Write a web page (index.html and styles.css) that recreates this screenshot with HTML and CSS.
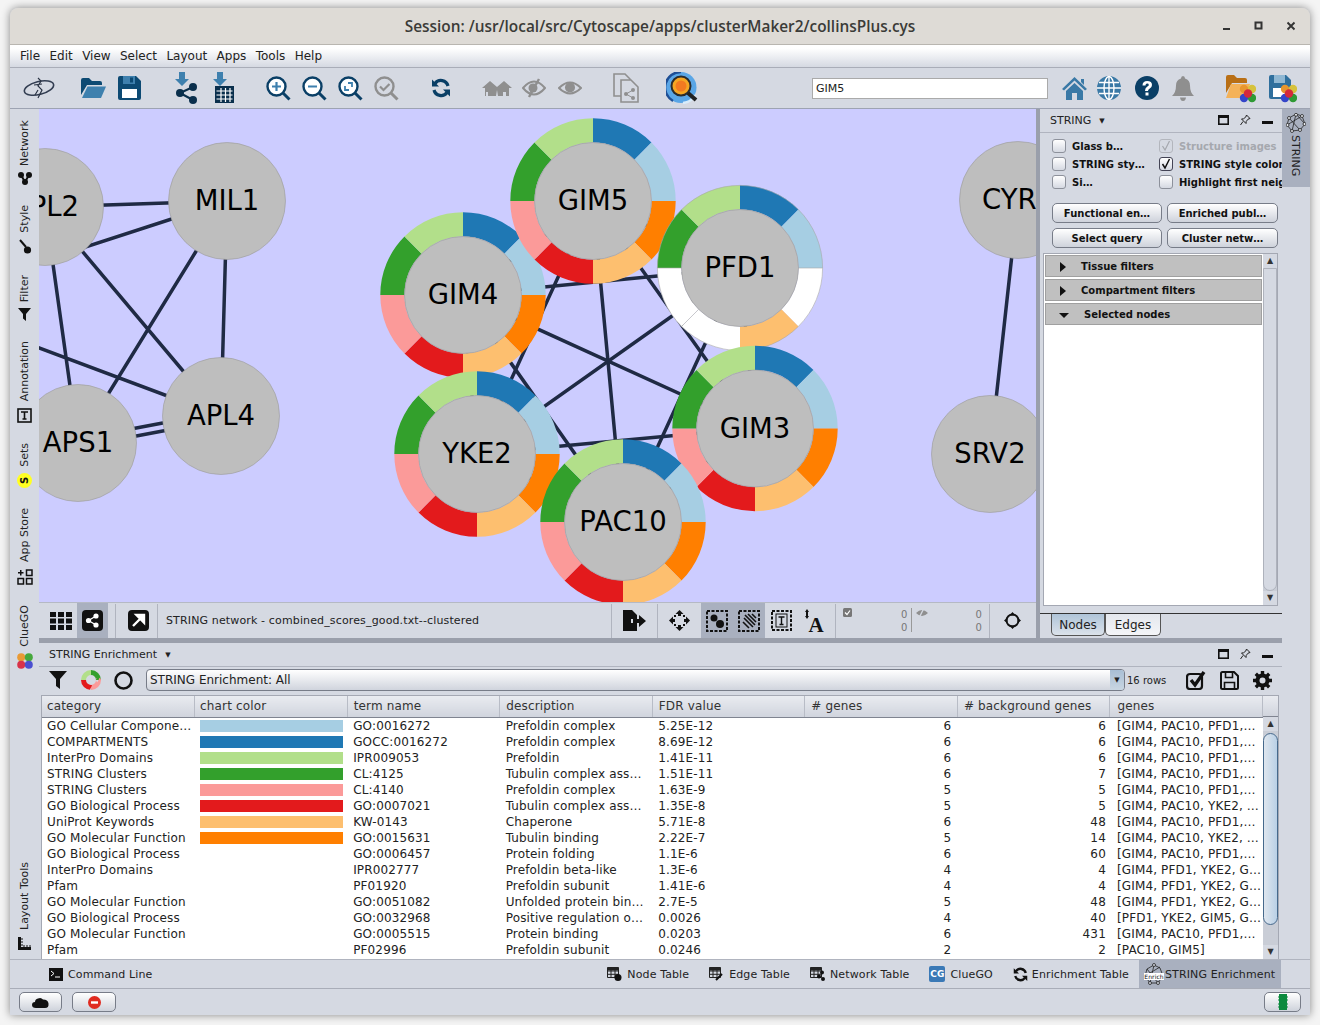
FILE: index.html
```html
<!DOCTYPE html>
<html lang="en">
<head>
<meta charset="utf-8">
<title>Cytoscape</title>
<link rel="stylesheet" href="styles.css">
</head>
<body>
<div class="window">
  <header class="titlebar">
    <span class="title">Session: /usr/local/src/Cytoscape/apps/clusterMaker2/collinsPlus.cys</span>
    <div class="winbtns">
      <svg width="10" height="10" viewBox="0 0 10 10"><rect x="1" y="7" width="7" height="2" fill="#333"/></svg>
      <svg width="10" height="10" viewBox="0 0 10 10"><rect x="1.5" y="1.5" width="6" height="6" fill="none" stroke="#333" stroke-width="2"/></svg>
      <svg width="10" height="10" viewBox="0 0 10 10"><path d="M1.5 1.5l7 7M8.500 1.500l-7 7" stroke="#333" stroke-width="1.900"/></svg>
    </div>
  </header>
  <nav class="menubar"><span>File</span><span>Edit</span><span>View</span><span>Select</span><span>Layout</span><span>Apps</span><span>Tools</span><span>Help</span></nav>
  <div class="toolbar">
    <svg class="t-logo" width="34" height="26" viewBox="0 0 34 26"><ellipse cx="17" cy="13" rx="15" ry="6.500" fill="none" stroke="#333e52" stroke-width="1.600" transform="rotate(-14 17 13)"/><path d="M16 3l3 3-3 5 4 4-4 8M12 10l8-1M13 20l3-5" fill="none" stroke="#2b3445" stroke-width="1.200"/></svg>
    <svg class="t-open" width="25" height="22" viewBox="0 0 25 22"><path d="M0 21V3q0-2 2-2h6l3 3h8q2 0 2 2v2H6L0 18z" fill="#0d4a73"/><path d="M6.500 9.500H25l-5 11.500H1z" fill="#3e80ae"/></svg>
    <svg class="t-save" width="23" height="24" viewBox="0 0 23 24"><path d="M0 2q0-2 2-2h16l5 5v17q0 2-2 2H2q-2 0-2-2z" fill="#0d4a73"/><rect x="5" y="0" width="12" height="8" fill="#3e80ae"/><rect x="12" y="1.500" width="3" height="5" fill="#0d4a73"/><rect x="4" y="13" width="15" height="9" fill="#fff"/></svg>
    <svg class="t-imp" width="23" height="32" viewBox="0 0 23 32"><path d="M4 0h6v7h4l-7 7-7-7h4z" fill="#3e80ae"/><g fill="#0a2f4c"><circle cx="5" cy="21" r="4"/><circle cx="18" cy="15" r="4"/><circle cx="18" cy="28" r="4"/><path d="M5 21L18 15M5 21L18 28" stroke="#0a2f4c" stroke-width="2"/></g></svg>
    <svg class="t-impt" width="22" height="32" viewBox="0 0 22 32"><path d="M4 0h6v7h4l-7 7-7-7h4z" fill="#3e80ae"/><rect x="2" y="14" width="19" height="17" fill="#0a2f4c"/><path d="M3.500 19h16M3.500 23h16M3.500 27h16M8 16v14M12.500 16v14M17 16v14" stroke="#fff" stroke-width="1.200"/></svg>
    <svg class="t-zin" width="25" height="25" viewBox="0 0 25 25"><circle cx="10.500" cy="10.500" r="9" fill="#fff" stroke="#0a3f66" stroke-width="2.400"/><path d="M16.500 16.500l7 7" stroke="#0a3f66" stroke-width="3"/><path d="M6 10.500h9M10.500 6v9" stroke="#3e80ae" stroke-width="2.200"/></svg>
    <svg class="t-zi" width="25" height="25" viewBox="0 0 25 25"><circle cx="10.500" cy="10.500" r="9" fill="#fff" stroke="#0a3f66" stroke-width="2.400"/><path d="M16.500 16.500l7 7" stroke="#0a3f66" stroke-width="3"/><path d="M6 10.500h9" stroke="#3e80ae" stroke-width="2.200"/></svg>
    <svg class="t-zi" width="25" height="25" viewBox="0 0 25 25"><circle cx="10.500" cy="10.500" r="9" fill="#fff" stroke="#0a3f66" stroke-width="2.400"/><path d="M16.500 16.500l7 7" stroke="#0a3f66" stroke-width="3"/><path d="M7 10v4h4M14 11V7h-4" fill="none" stroke="#3e80ae" stroke-width="1.800"/></svg>
    <svg class="t-zi" width="25" height="25" viewBox="0 0 25 25"><circle cx="10.500" cy="10.500" r="9" fill="none" stroke="#8f8f8f" stroke-width="2.400"/><path d="M16.500 16.500l7 7" stroke="#8f8f8f" stroke-width="3"/><path d="M6 10.500l3.500 3.500 6-6" fill="none" stroke="#8f8f8f" stroke-width="2.200"/></svg>
    <svg class="t-ref" width="20" height="20" viewBox="0 0 20 20"><path d="M17 8a7.300 7.300 0 0 0-13-2.500" fill="none" stroke="#0a3f66" stroke-width="3.200"/><path d="M1 1.500v7h7z" fill="#0a3f66"/><path d="M3 12a7.300 7.300 0 0 0 13 2.500" fill="none" stroke="#0a3f66" stroke-width="3.200"/><path d="M19 18.500v-7h-7z" fill="#0a3f66"/></svg>
    <svg class="t-hide" width="31" height="15" viewBox="0 0 31 15"><path d="M0 7L8 0l7 6 7-6 8 7h-3v8h-3v-4h-3v4h-5l-1-6-1 6H6v-4H4v4H3V7z" fill="#8f8f8f"/></svg>
    <svg class="t-eye1" width="24" height="20" viewBox="0 0 24 20"><path d="M1 10q11-13 22 0-11 13-22 0z" fill="none" stroke="#8f8f8f" stroke-width="2"/><circle cx="11" cy="10" r="4.500" fill="#8f8f8f"/><path d="M7 19L17 1" stroke="#8f8f8f" stroke-width="2.400"/></svg>
    <svg class="t-eye2" width="24" height="18" viewBox="0 0 24 18"><path d="M1 9q11-11 22 0-11 11-22 0z" fill="none" stroke="#8f8f8f" stroke-width="2"/><circle cx="12" cy="8.500" r="5" fill="#8f8f8f"/></svg>
    <svg class="t-doc" width="26" height="30" viewBox="0 0 26 30"><path d="M1 1h11l5 5v17H1z" fill="#d5d9e2" stroke="#8f8f8f" stroke-width="1.600"/><path d="M8 7h10l7 7v15H8z" fill="#d5d9e2" stroke="#8f8f8f" stroke-width="1.600"/><g fill="#8f8f8f"><circle cx="13" cy="21" r="2"/><circle cx="20" cy="17" r="2"/><circle cx="20" cy="25" r="2"/><path d="M13 21l7-4M13 21l7 4" stroke="#8f8f8f"/></g></svg>
    <svg class="t-find" width="33" height="32" viewBox="0 0 33 32"><circle cx="15" cy="15.500" r="15.500" fill="#5aa6e6"/><path d="M15 0a15.500 15.500 0 0 0-8 29" fill="none" stroke="#1f4f95" stroke-width="2.400"/><path d="M17 31a15.500 15.500 0 0 0 12-8" fill="none" stroke="#d8ecfb" stroke-width="2.400"/><circle cx="15" cy="14" r="9.500" fill="#f5a623" stroke="#2b2b2b" stroke-width="2"/><circle cx="15" cy="14" r="5.500" fill="#f27a21"/><path d="M22 21l8 7" stroke="#222" stroke-width="4"/></svg>
    <div class="search">GIM5</div>
    <svg class="t-home" width="25" height="23" viewBox="0 0 25 23"><path d="M0 12L12.500 0 25 12l-2 1.500-10.500-10-10.500 10z" fill="#3a79a6"/><path d="M19 2h3v6l-3-3z" fill="#3a79a6"/><path d="M4 14l8.500-8 8.500 8v9h-6v-7h-5v7H4z" fill="#3a79a6"/></svg>
    <svg class="t-glob" width="24" height="24" viewBox="0 0 24 24"><circle cx="12" cy="12" r="12" fill="#3a79a6"/><g fill="none" stroke="#fff" stroke-width="1.400"><ellipse cx="12" cy="12" rx="5" ry="11.500"/><path d="M12 0v24M0 12h24M2 6.500h20M2 17.500h20"/></g></svg>
    <svg class="t-help" width="24" height="24" viewBox="0 0 24 24"><circle cx="12" cy="12" r="12" fill="#0a3f66"/><path d="M7.500 9.500q0-4.500 4.700-4.500 4.800 0 4.800 4 0 2.500-2.500 3.700-1.500.8-1.500 2.300h-3q0-3 2-4.200 1.800-1 1.800-1.900 0-1.300-1.600-1.300-1.700 0-1.700 1.900z" fill="#fff"/><rect x="10.500" y="16.500" width="3" height="3" fill="#fff"/></svg>
    <svg class="t-bell" width="22" height="25" viewBox="0 0 22 25"><path d="M11 0q2 0 2 2.500 5 1.500 5 7 0 7 4 10.500H0q4-3.500 4-10.500 0-5.500 5-7Q9 0 11 0zM8 21.500h6Q13.500 25 11 25t-3-3.500z" fill="#8f8f8f"/></svg>
    <svg class="t-fold" width="30" height="30" viewBox="0 0 30 30"><path d="M0 24V4q0-2 2-2h6l3 3h8q2 0 2 2v3H6L0 20z" fill="#b96f15"/><path d="M5 11h19l-5 14H0z" fill="#f4b259"/><circle cx="18" cy="16" r="4.200" fill="#e8952d"/><circle cx="26" cy="16" r="4.200" fill="#d6c23c"/><circle cx="18" cy="25" r="4.200" fill="#3546c9"/><circle cx="26" cy="25" r="4.200" fill="#2f9a35"/><circle cx="22" cy="20.500" r="4.200" fill="#d4293b"/></svg>
    <svg class="t-sav2" width="28" height="30" viewBox="0 0 28 30"><path d="M0 4q0-2 2-2h15l5 5v17q0 2-2 2H2q-2 0-2-2z" fill="#2f6f9d"/><rect x="5" y="2" width="11" height="8" fill="#8fb7d3"/><rect x="4" y="15" width="13" height="9" fill="#fff"/><circle cx="16" cy="16" r="4.200" fill="#e8952d"/><circle cx="24" cy="16" r="4.200" fill="#d6c23c"/><circle cx="16" cy="25" r="4.200" fill="#3546c9"/><circle cx="24" cy="25" r="4.200" fill="#2f9a35"/><circle cx="20" cy="20.500" r="4.200" fill="#d4293b"/></svg>
  </div>

  <div class="main">
    <aside class="lstrip">
      <div class="vtab"><span class="vt">Network</span>
        <svg width="14" height="13" viewBox="0 0 14 13"><g fill="#111"><circle cx="3" cy="3" r="3"/><circle cx="11" cy="3" r="3"/><circle cx="7" cy="10" r="3"/><path d="M3 3l4 7 4-7" stroke="#111" stroke-width="2" fill="none"/></g></svg></div>
      <div class="vtab"><span class="vt">Style</span>
        <svg width="14" height="15" viewBox="0 0 14 15"><path d="M2 1l6 7" stroke="#111" stroke-width="2"/><ellipse cx="9.500" cy="11" rx="3.600" ry="3.600" fill="#111"/></svg></div>
      <div class="vtab"><span class="vt">Filter</span>
        <svg width="13" height="13" viewBox="0 0 13 13"><path d="M0 0h13L8 6v7L5 10.500V6z" fill="#111"/></svg></div>
      <div class="vtab"><span class="vt">Annotation</span>
        <svg width="15" height="15" viewBox="0 0 15 15"><rect x="1" y="1" width="13" height="13" fill="none" stroke="#111" stroke-width="1.600"/><path d="M4 4h7M7.500 4v7M5.500 11h4" stroke="#111" stroke-width="1.600"/></svg></div>
      <div class="vtab"><span class="vt">Sets</span>
        <svg width="15" height="15" viewBox="0 0 15 15"><circle cx="7.500" cy="7.500" r="7.500" fill="#ffff22"/><text x="7.500" y="11" class="sets-s" transform="rotate(-90 7.500 7.500)">S</text></svg></div>
      <div class="vtab"><span class="vt">App Store</span>
        <svg width="16" height="16" viewBox="0 0 16 16"><g fill="none" stroke="#111" stroke-width="1.500"><rect x="9.500" y="1" width="5.500" height="5.500"/><rect x="1" y="9.500" width="5.500" height="5.500"/><rect x="9.500" y="9.500" width="5.500" height="5.500"/><path d="M1 3.750h5.500M3.750 1v5.500"/></g></svg></div>
      <div class="vtab"><span class="vt">ClueGO</span>
        <svg width="16" height="16" viewBox="0 0 16 16"><circle cx="4.200" cy="4.200" r="4" fill="#e99a35"/><circle cx="11.800" cy="4.200" r="4" fill="#46a83c"/><circle cx="4.200" cy="11.800" r="4" fill="#d8334a"/><circle cx="11.800" cy="11.800" r="4" fill="#4a4fd0"/></svg></div>
      <div class="vtab vtab-end"><span class="vt">Layout Tools</span>
        <svg width="15" height="15" viewBox="0 0 15 15"><path d="M1 1h3v10h10v3H1z" fill="#111"/><path d="M4 3h2M4 6h2M4 9h2M7 11v-2M10 11v-2M13 11v-2" stroke="#111"/></svg></div>
    </aside>

    <div class="center">
      <div class="upper">
        <div class="netcol">
          <svg class="canvas" viewBox="39 109 997 493">
            <defs>
              <g id="seg"><circle r="70.600" fill="none" stroke-width="24.200" pathLength="8" stroke-dasharray="1 7"/></g>
              <g id="ring">
                <g transform="rotate(-90)">
                  <use href="#seg" stroke="#1f78b4"/>
                  <use href="#seg" stroke="#a6cee3" transform="rotate(45)"/>
                  <use href="#seg" stroke="#ff7f00" transform="rotate(90)"/>
                  <use href="#seg" stroke="#fdbf6f" transform="rotate(135)"/>
                  <use href="#seg" stroke="#e31a1c" transform="rotate(180)"/>
                  <use href="#seg" stroke="#fb9a99" transform="rotate(225)"/>
                  <use href="#seg" stroke="#33a02c" transform="rotate(270)"/>
                  <use href="#seg" stroke="#b2df8a" transform="rotate(315)"/>
                </g>
                <circle r="58.500" class="node"/>
              </g>
              <g id="ringw">
                <g transform="rotate(-90)">
                  <use href="#seg" stroke="#1f78b4"/>
                  <use href="#seg" stroke="#a6cee3" transform="rotate(45)"/>
                  <use href="#seg" stroke="#fff" transform="rotate(90)"/>
                  <use href="#seg" stroke="#fdbf6f" transform="rotate(135)"/>
                  <use href="#seg" stroke="#fff" transform="rotate(180)"/>
                  <use href="#seg" stroke="#fff" transform="rotate(225)"/>
                  <use href="#seg" stroke="#33a02c" transform="rotate(270)"/>
                  <use href="#seg" stroke="#b2df8a" transform="rotate(315)"/>
                  <circle r="82.600" class="outline"/>
                </g>
                <path d="M-41.400 41.400L-58.300 58.300M58.500 0H82.700M-58.500 0H-82.700" class="divider"/>
                <circle r="58.500" class="node"/>
              </g>
            </defs>
            <g class="edges">
              <path d="M593 201L463 295M593 201L740 268M593 201L755 428M593 201L477 454M593 201L623 522"/>
              <path d="M463 295L740 268M463 295L755 428M463 295L477 454M463 295L623 522"/>
              <path d="M740 268L755 428M740 268L477 454M740 268L623 522"/>
              <path d="M755 428L477 454M755 428L623 522M477 454L623 522"/>
              <path d="M45 207L227 201M-50 291L227 201M45 207L221 416M227 201L78 443M227 201L221 416M45 207L78 443M-30 322L221 416M78 439L221 412M78 447L221 420M1018 200L990 454"/>
            </g>
            <circle cx="45" cy="207" r="58.500" class="node"/><text x="45" y="216" class="lbl">APL2</text>
            <circle cx="227" cy="201" r="58.500" class="node"/><text x="227" y="210" class="lbl">MIL1</text>
            <circle cx="221" cy="416" r="58.500" class="node"/><text x="221" y="425" class="lbl">APL4</text>
            <circle cx="78" cy="443" r="58.500" class="node"/><text x="78" y="452" class="lbl">APS1</text>
            <circle cx="1018" cy="200" r="58.500" class="node"/><text x="1018" y="209" class="lbl">CYR1</text>
            <circle cx="990" cy="454" r="58.500" class="node"/><text x="990" y="463" class="lbl">SRV2</text>
            <use href="#ring" x="463" y="295"/><text x="463" y="304" class="lbl">GIM4</text>
            <use href="#ring" x="593" y="201"/><text x="593" y="210" class="lbl">GIM5</text>
            <use href="#ringw" x="740" y="268"/><text x="740" y="277" class="lbl">PFD1</text>
            <use href="#ring" x="755" y="428.500"/><text x="755" y="437.500" class="lbl">GIM3</text>
            <use href="#ring" x="477" y="454"/><text x="477" y="463" class="lbl">YKE2</text>
            <use href="#ring" x="623" y="522"/><text x="623" y="531" class="lbl">PAC10</text>
          </svg>
          <div class="nettools">
            <svg class="n-grid" width="23" height="18" viewBox="0 0 23 18"><g fill="#111"><rect width="6" height="5"/><rect x="8" width="6" height="5"/><rect x="16" width="6" height="5"/><rect y="6.500" width="6" height="5"/><rect x="8" y="6.500" width="6" height="5"/><rect x="16" y="6.500" width="6" height="5"/><rect y="13" width="6" height="5"/><rect x="8" y="13" width="6" height="5"/><rect x="16" y="13" width="6" height="5"/></g></svg>
            <div class="n-sel"><svg width="21" height="21" viewBox="0 0 21 21"><rect width="21" height="21" rx="4" fill="#111"/><g fill="#fff"><circle cx="6.500" cy="10.500" r="2.600"/><circle cx="14" cy="6" r="2.600"/><circle cx="14" cy="15" r="2.600"/><path d="M6.500 10.500L14 6M6.500 10.500L14 15" stroke="#fff" stroke-width="1.400"/></g></svg></div>
            <i class="sep s1"></i>
            <svg width="21" height="21" viewBox="0 0 21 21"><rect width="21" height="21" rx="4" fill="#111"/><path d="M5 16l7-7M8.500 5H16v7.500z" stroke="#fff" stroke-width="2.400" fill="#fff"/></svg>
            <i class="sep s2"></i>
            <span class="nettitle">STRING network - combined_scores_good.txt--clustered</span>
            <i class="sep"></i>
            <svg class="n-exp" width="23" height="21" viewBox="0 0 23 21"><path d="M0 0h9l5 5v4H8v4h6v8H0z" fill="#111"/><path d="M10 9h6V5l7 6-7 6v-4h-6z" fill="#111"/></svg>
            <i class="sep s3"></i>
            <svg class="n-fit" width="21" height="21" viewBox="0 0 21 21"><path d="M10.500 0l4 4H12v2h-3V4H6.500zM10.500 21l4-4H12v-2h-3v2H6.500zM0 10.500l4-4V9h2v3H4v2.500zM21 10.500l-4-4V9h-2v3h2v2.500z" fill="#111"/><path d="M5 5h2v2H5zM14 5h2v2h-2zM5 14h2v2H5zM14 14h2v2h-2z" fill="#111"/></svg>
            <div class="n-tog n-first"><svg width="22" height="22" viewBox="0 0 22 22"><rect x="1" y="1" width="20" height="20" fill="none" stroke="#111" stroke-width="2" stroke-dasharray="3 1.500"/><circle cx="8" cy="8" r="3.500" fill="#111"/><circle cx="14" cy="14" r="4" fill="#111"/></svg></div>
            <div class="n-tog"><svg width="22" height="22" viewBox="0 0 22 22"><rect x="1" y="1" width="20" height="20" fill="none" stroke="#111" stroke-width="2" stroke-dasharray="3 1.500"/><path d="M4 8l4 -4M4 12l8-8M5 15l10-10M8 16l9-9M12 17l6-6" stroke="#111" stroke-width="1.600" transform="rotate(90 11 11)"/></svg></div>
            <svg class="n-t" width="21" height="21" viewBox="0 0 21 21"><rect x="1" y="1" width="19" height="19" fill="none" stroke="#111" stroke-width="2" stroke-dasharray="3 1.500"/><rect x="5" y="4" width="11" height="13" fill="none" stroke="#111"/><path d="M7.500 7h6M10.500 7v7.500M8.500 14.500h4" stroke="#111" stroke-width="1.400"/></svg>
            <svg class="n-a" width="22" height="24" viewBox="0 0 22 24"><path d="M4 0l2 3H5v4h1l-2 3-2-3h1V3H2z" fill="#111"/><text x="13" y="23" class="big-a">A</text></svg>
            <i class="sep s4"></i>
            <div class="counts">
              <svg class="c-chk" width="9" height="9" viewBox="0 0 9 9"><rect width="9" height="9" rx="1.500" fill="#777"/><path d="M2 4.500l2 2 3-4" stroke="#fff" fill="none" stroke-width="1.200"/></svg>
              <span class="c-n">0<br>0</span>
              <i class="c-bar"></i>
              <svg class="c-eye" width="12" height="10" viewBox="0 0 12 10"><path d="M0 5q6-6 12 0-6 6-12 0z" fill="#8f8f8f"/><path d="M3 10l5-10" stroke="#d5d9e2" stroke-width="1.400"/></svg>
              <span class="c-n c-n2">0<br>0</span>
            </div>
            <i class="sep s5"></i>
            <svg class="n-net" width="17" height="17" viewBox="0 0 17 17"><circle cx="8.500" cy="8.500" r="6" fill="none" stroke="#111" stroke-width="1.800"/><path d="M8.500 0l3 3.500h-6zM8.500 17l3-3.500h-6zM0 8.500l3.500 3v-6zM17 8.500l-3.500 3v-6z" fill="#111"/></svg>
          </div>
        </div>
        <div class="vsplit"></div>
        <section class="rpanel">
          <div class="phead"><span>STRING</span><b class="caret">▼</b>
            <div class="pctl">
              <svg width="11" height="10" viewBox="0 0 11 10"><rect x=".8" y=".8" width="9.400" height="8.400" fill="none" stroke="#111" stroke-width="1.600"/><rect x="1" y="1" width="9" height="2" fill="#111"/></svg>
              <svg width="11" height="12" viewBox="0 0 11 12"><path d="M6.500 1l3.500 3.500-2 .7-1.800 2.300L6 9.500 1.500 5l2-.2L5.800 3z" fill="none" stroke="#222"/><path d="M3 7.500L.5 11" stroke="#222"/></svg>
              <svg width="11" height="10" viewBox="0 0 11 10"><rect y="6" width="11" height="3" fill="#111"/></svg>
            </div>
          </div>
          <div class="checks">
            <label class="chk"><i class="box"></i><span>Glass b…</span></label>
            <label class="chk off"><i class="box"><svg width="12" height="12" viewBox="0 0 12 12"><path d="M2.500 6l2.500 4 4.500-9" fill="none" stroke="#a5a8ae" stroke-width="1.200"/></svg></i><span>Structure images</span></label>
            <label class="chk"><i class="box"></i><span>STRING sty…</span></label>
            <label class="chk"><i class="box box-on"><svg width="12" height="12" viewBox="0 0 12 12"><path d="M2.500 6l2.500 4 4.500-9" fill="none" stroke="#111" stroke-width="1.500"/></svg></i><span>STRING style color</span></label>
            <label class="chk"><i class="box"></i><span>Si…</span></label>
            <label class="chk"><i class="box"></i><span>Highlight first neig</span></label>
          </div>
          <div class="pbtns">
            <button>Functional en…</button><button>Enriched publ…</button>
            <button>Select query</button><button>Cluster netw…</button>
          </div>
          <div class="filters">
            <div class="flist">
              <div class="fitem"><i class="tri-r"></i><span>Tissue filters</span></div>
              <div class="fitem"><i class="tri-r"></i><span>Compartment filters</span></div>
              <div class="fitem fopen"><i class="tri-d"></i><span>Selected nodes</span></div>
            </div>
            <div class="pscroll"><b class="arr">▲</b><i class="thumb"></i><b class="arr">▼</b></div>
          </div>
          <div class="ntabs"><span class="ntab ntab-on">Nodes</span><span class="ntab">Edges</span></div>
        </section>
      </div>
      <div class="hsplit"></div>
      <section class="bpanel">
        <div class="phead bhead"><span>STRING Enrichment</span><b class="caret">▼</b>
          <div class="pctl">
            <svg width="11" height="10" viewBox="0 0 11 10"><rect x=".8" y=".8" width="9.400" height="8.400" fill="none" stroke="#111" stroke-width="1.600"/><rect x="1" y="1" width="9" height="2" fill="#111"/></svg>
            <svg width="11" height="12" viewBox="0 0 11 12"><path d="M6.500 1l3.500 3.500-2 .7-1.800 2.300L6 9.500 1.500 5l2-.2L5.800 3z" fill="none" stroke="#222"/><path d="M3 7.500L.5 11" stroke="#222"/></svg>
            <svg width="11" height="10" viewBox="0 0 11 10"><rect y="6" width="11" height="3" fill="#111"/></svg>
          </div>
        </div>
        <div class="frow">
          <svg class="f-filter" width="18" height="18" viewBox="0 0 18 18"><path d="M0 0h18l-7 8v10l-4-3V8z" fill="#111"/></svg>
          <svg class="f-donut" width="20" height="20" viewBox="0 0 20 20"><g fill="none" stroke-width="5" transform="rotate(-90 10 10)"><circle cx="10" cy="10" r="7.500" stroke="#33a02c" pathLength="8" stroke-dasharray="2 6"/><circle cx="10" cy="10" r="7.500" stroke="#fb9a99" pathLength="8" stroke-dasharray="2 6" stroke-dashoffset="-2"/><circle cx="10" cy="10" r="7.500" stroke="#e31a1c" pathLength="8" stroke-dasharray="2 6" stroke-dashoffset="-4"/><circle cx="10" cy="10" r="7.500" stroke="#b2df8a" pathLength="8" stroke-dasharray="2 6" stroke-dashoffset="-6"/></g></svg>
          <svg class="f-ring" width="19" height="19" viewBox="0 0 19 19"><circle cx="9.500" cy="9.500" r="8" fill="none" stroke="#111" stroke-width="2.600"/></svg>
          <div class="combo"><span>STRING Enrichment: All</span><i class="cbtn">▼</i></div>
          <span class="rows">16 rows</span>
          <svg class="f-chk" width="20" height="19" viewBox="0 0 20 19"><rect x="1" y="3" width="15" height="15" rx="3" fill="none" stroke="#111" stroke-width="2.200"/><path d="M5 9l4 5 9-13" fill="none" stroke="#111" stroke-width="3.400"/></svg>
          <svg class="f-sav" width="19" height="19" viewBox="0 0 19 19"><path d="M1 2.500q0-1.500 1.500-1.500H14l4 4v11.500q0 1.500-1.500 1.500h-14Q1 18 1 16.500z" fill="none" stroke="#111" stroke-width="2"/><path d="M5.500 1.500v5h7v-5M4.500 17.500v-6h10v6" fill="none" stroke="#111" stroke-width="1.600"/></svg>
          <svg class="f-gear" width="19" height="19" viewBox="0 0 19 19"><circle cx="9.500" cy="9.500" r="5" fill="none" stroke="#111" stroke-width="4"/><path d="M9.500 0v19M0 9.500h19M2.800 2.800l13.400 13.400M16.200 2.800L2.800 16.200" stroke="#111" stroke-width="3.400" stroke-dasharray="3.400 12.200"/></svg>
        </div>
        <div class="tblbox">
          <div class="tblmain">
            <table>
              <thead><tr><th>category</th><th>chart color</th><th>term name</th><th>description</th><th>FDR value</th><th># genes</th><th># background genes</th><th>genes</th></tr></thead>
              <tbody>
                <tr><td>GO Cellular Compone…</td><td class="cc"><i class="c1"></i></td><td>GO:0016272</td><td>Prefoldin complex</td><td>5.25E-12</td><td class="n">6</td><td class="n">6</td><td>[GIM4, PAC10, PFD1,…</td></tr>
                <tr><td>COMPARTMENTS</td><td class="cc"><i class="c2"></i></td><td>GOCC:0016272</td><td>Prefoldin complex</td><td>8.69E-12</td><td class="n">6</td><td class="n">6</td><td>[GIM4, PAC10, PFD1,…</td></tr>
                <tr><td>InterPro Domains</td><td class="cc"><i class="c3"></i></td><td>IPR009053</td><td>Prefoldin</td><td>1.41E-11</td><td class="n">6</td><td class="n">6</td><td>[GIM4, PAC10, PFD1,…</td></tr>
                <tr><td>STRING Clusters</td><td class="cc"><i class="c4"></i></td><td>CL:4125</td><td>Tubulin complex ass…</td><td>1.51E-11</td><td class="n">6</td><td class="n">7</td><td>[GIM4, PAC10, PFD1,…</td></tr>
                <tr><td>STRING Clusters</td><td class="cc"><i class="c5"></i></td><td>CL:4140</td><td>Prefoldin complex</td><td>1.63E-9</td><td class="n">5</td><td class="n">5</td><td>[GIM4, PAC10, PFD1,…</td></tr>
                <tr><td>GO Biological Process</td><td class="cc"><i class="c6"></i></td><td>GO:0007021</td><td>Tubulin complex ass…</td><td>1.35E-8</td><td class="n">5</td><td class="n">5</td><td>[GIM4, PAC10, YKE2, …</td></tr>
                <tr><td>UniProt Keywords</td><td class="cc"><i class="c7"></i></td><td>KW-0143</td><td>Chaperone</td><td>5.71E-8</td><td class="n">6</td><td class="n">48</td><td>[GIM4, PAC10, PFD1,…</td></tr>
                <tr><td>GO Molecular Function</td><td class="cc"><i class="c8"></i></td><td>GO:0015631</td><td>Tubulin binding</td><td>2.22E-7</td><td class="n">5</td><td class="n">14</td><td>[GIM4, PAC10, YKE2, …</td></tr>
                <tr><td>GO Biological Process</td><td></td><td>GO:0006457</td><td>Protein folding</td><td>1.1E-6</td><td class="n">6</td><td class="n">60</td><td>[GIM4, PAC10, PFD1,…</td></tr>
                <tr><td>InterPro Domains</td><td></td><td>IPR002777</td><td>Prefoldin beta-like</td><td>1.3E-6</td><td class="n">4</td><td class="n">4</td><td>[GIM4, PFD1, YKE2, G…</td></tr>
                <tr><td>Pfam</td><td></td><td>PF01920</td><td>Prefoldin subunit</td><td>1.41E-6</td><td class="n">4</td><td class="n">4</td><td>[GIM4, PFD1, YKE2, G…</td></tr>
                <tr><td>GO Molecular Function</td><td></td><td>GO:0051082</td><td>Unfolded protein bin…</td><td>2.7E-5</td><td class="n">5</td><td class="n">48</td><td>[GIM4, PFD1, YKE2, G…</td></tr>
                <tr><td>GO Biological Process</td><td></td><td>GO:0032968</td><td>Positive regulation o…</td><td>0.0026</td><td class="n">4</td><td class="n">40</td><td>[PFD1, YKE2, GIM5, G…</td></tr>
                <tr><td>GO Molecular Function</td><td></td><td>GO:0005515</td><td>Protein binding</td><td>0.0203</td><td class="n">6</td><td class="n">431</td><td>[GIM4, PAC10, PFD1,…</td></tr>
                <tr><td>Pfam</td><td></td><td>PF02996</td><td>Prefoldin subunit</td><td>0.0246</td><td class="n">2</td><td class="n">2</td><td>[PAC10, GIM5]</td></tr>
              </tbody>
            </table>
          </div>
          <div class="tscroll"><div class="tscroll-head"></div><b class="arr">▲</b><i class="tthumb"></i><b class="arr">▼</b></div>
        </div>
      </section>
    </div>

    <aside class="rstrip">
      <div class="rtab">
        <svg width="20" height="20" viewBox="0 0 20 20"><g fill="#e8ebf0" stroke="#222" stroke-width=".8"><path d="M10 1L3 5l-2 7 5 6 8-1 5-6-3-8zM10 1l-4 17M3 5l11 12M16 3L1 12M10 1l9 10" fill="none"/><circle cx="10" cy="1.800" r="1.500"/><circle cx="3" cy="5" r="1.500"/><circle cx="16" cy="3" r="1.500"/><circle cx="1.500" cy="12" r="1.500"/><circle cx="18.500" cy="11" r="1.500"/><circle cx="6" cy="18" r="1.500"/><circle cx="14" cy="17" r="1.500"/></g></svg>
        <span>STRING</span>
      </div>
    </aside>
  </div>

  <div class="tabsbar">
    <div class="bt bt-cmd"><svg width="14" height="13" viewBox="0 0 14 13"><rect width="14" height="13" fill="#111"/><path d="M2 3l3 2.500L2 8M6 9h5" stroke="#fff" fill="none"/></svg><span>Command Line</span></div>
    <div class="bt bt-node"><svg width="15" height="14" viewBox="0 0 15 14"><path d="M.5.500h11v10H.5zM.5 4h11M.5 7.300h11M4 .5v10M8 .5v10" fill="none" stroke="#222"/><rect x=".5" y=".5" width="11" height="3" fill="#222"/><circle cx="11" cy="10.500" r="3.500" fill="#111"/></svg><span>Node Table</span></div>
    <div class="bt bt-gap"><svg width="15" height="14" viewBox="0 0 15 14"><path d="M.5.500h11v10H.5zM.5 4h11M.5 7.300h11M4 .5v10M8 .5v10" fill="none" stroke="#222"/><rect x=".5" y=".5" width="11" height="3" fill="#222"/><path d="M7 13l6-6" stroke="#111" stroke-width="2"/></svg><span>Edge Table</span></div>
    <div class="bt bt-gap"><svg width="15" height="14" viewBox="0 0 15 14"><path d="M.5.500h11v10H.5zM.5 4h11M.5 7.300h11M4 .5v10M8 .5v10" fill="none" stroke="#222"/><rect x=".5" y=".5" width="11" height="3" fill="#222"/><circle cx="12" cy="5.500" r="2" fill="#111"/><circle cx="9" cy="9.500" r="2" fill="#111"/><circle cx="13" cy="12" r="2" fill="#111"/></svg><span>Network Table</span></div>
    <div class="bt bt-gap"><i class="cg">CG</i><span>ClueGO</span></div>
    <div class="bt bt-gap bt-enr"><svg width="15" height="15" viewBox="0 0 20 20"><path d="M17 8a7.300 7.300 0 0 0-13-2.500" fill="none" stroke="#111" stroke-width="3.200"/><path d="M1 1.500v7h7z" fill="#111"/><path d="M3 12a7.300 7.300 0 0 0 13 2.500" fill="none" stroke="#111" stroke-width="3.200"/><path d="M19 18.500v-7h-7z" fill="#111"/></svg><span>Enrichment Table</span></div>
    <div class="bt bt-on"><svg width="20" height="22" viewBox="0 0 20 22"><g fill="#d5d9e2" stroke="#222" stroke-width=".8"><path d="M10 2L3 6l-2 7 5 7 8 0 5-7-3-8zM10 2L6 20M3 6l11 14M16 4L1 13" fill="none"/><circle cx="10" cy="2" r="1.500"/><circle cx="6" cy="20" r="1.500"/><circle cx="14" cy="20" r="1.500"/></g><rect x="0" y="10" width="20" height="7" fill="#fff"/><text x="10" y="16" class="enr">Enrich</text></svg><span>STRING Enrichment</span></div>
  </div>
  <footer class="statusbar">
    <button class="sb"><svg width="17" height="11" viewBox="0 0 17 11"><path d="M4 11Q0 11 0 8t3-3q0-3 3-3.500Q9 0 11 2.500q5 0 5.500 4Q17 11 13 11z" fill="#111"/></svg></button>
    <button class="sb sb2"><svg width="13" height="13" viewBox="0 0 13 13"><circle cx="6.500" cy="6.500" r="6.500" fill="#e02b20"/><rect x="3" y="5.300" width="7" height="2.400" fill="#fff"/></svg></button>
    <button class="sb sb3"><svg width="10" height="16" viewBox="0 0 10 16"><rect x="1" y="0" width="8" height="16" fill="#0c8a3e"/><path d="M0 3h10M0 6h10M0 10h10M0 13h10" stroke="#0c8a3e" stroke-dasharray="1 8"/></svg></button>
  </footer>
</div>
</body>
</html>
```
FILE: styles.css
```css
* { box-sizing: border-box; }
html, body { margin: 0; height: 100%; }
body { background: #f4f4f4; font-family: "DejaVu Sans", sans-serif; font-size: 12px; color: #222; overflow: hidden; }
.window { margin: 8px 10px 0; width: 1300px; height: 1007px; background: #d5d9e2; display: flex; flex-direction: column; border-radius: 8px 8px 0 0; box-shadow: 0 0 8px rgba(0,0,0,.45); overflow: hidden; }

.titlebar { height: 37px; flex: none; background: #dedbd6; border-bottom: 1px solid #b9b6b0; display: flex; align-items: center; justify-content: center; position: relative; }
.title { font-family: "Open Sans", sans-serif; font-weight: 600; font-size: 15.400px; color: #3b3b38; }
.winbtns { position: absolute; right: 14px; top: 13px; display: flex; gap: 22px; }

.menubar { height: 23px; flex: none; background: linear-gradient(#ffffff 15%, #d5d9e2); display: flex; align-items: center; padding-left: 10px; gap: 9.400px; font-size: 12px; border-bottom: 1px solid #a9adb8; }

.toolbar { height: 41px; flex: none; display: flex; align-items: center; border-bottom: 1px solid #9da3b2; padding-left: 12px; }
.t-open { margin-left: 25px; } .t-save { margin-left: 12px; } .t-imp { margin-left: 34px; } .t-impt { margin-left: 15px; }
.t-zin { margin-left: 31px; } .t-zi { margin-left: 11px; } .t-ref { margin-left: 32px; } .t-hide { margin-left: 31px; }
.t-eye1 { margin-left: 9px; } .t-eye2 { margin-left: 12px; } .t-doc { margin-left: 31px; } .t-find { margin-left: 27px; }
.search { margin-left: 113px; margin-top: 1px; width: 236px; height: 21px; background: #fff; border: 1px solid #aaa; font-size: 11px; line-height: 19px; padding-left: 3px; }
.t-home { margin-left: 14px; } .t-glob { margin-left: 10px; } .t-help { margin-left: 14px; } .t-bell { margin-left: 13px; } .t-fold { margin-left: 32px; } .t-sav2 { margin-left: 13px; }

.main { flex: 1; min-height: 0; display: flex; }
.lstrip { width: 29px; flex: none; display: flex; flex-direction: column; align-items: center; padding-top: 11px; gap: 20.500px; }
.vtab { display: flex; flex-direction: column; align-items: center; gap: 6px; }
.vtab-end { margin-top: auto; padding-bottom: 8px; }
.vt { writing-mode: vertical-rl; transform: rotate(180deg); font-size: 11px; color: #222; }
.sets-s { font: bold 10px "DejaVu Sans", sans-serif; text-anchor: middle; fill: #111; }

.center { flex: 1; min-width: 0; display: flex; flex-direction: column; }
.upper { height: 529px; flex: none; display: flex; }
.netcol { width: 997px; flex: none; display: flex; flex-direction: column; }
.canvas { width: 997px; height: 493px; display: block; background: #ccccff; flex: none; }
.edges path { stroke: #1f2a44; stroke-width: 3.500; fill: none; }
.node { fill: #bebebe; stroke: #9a9a9a; stroke-width: .6; }
.outline { fill: none; stroke: #aaa; stroke-width: .6; }
.divider { stroke: #aaa; stroke-width: .6; fill: none; }
.lbl { font: 27.500px "DejaVu Sans", sans-serif; fill: #000; text-anchor: middle; }

.nettools { height: 36px; flex: none; display: flex; align-items: center; padding-left: 11px; border-top: 1px solid #b5b9c4; }
.n-sel { margin-left: 4px; width: 31px; height: 35px; background: #a9b0bf; display: flex; align-items: center; justify-content: center; }
.sep { width: 1px; height: 34px; background: #b0b4bf; flex: none; }
.s1 { margin: 0 12px 0 7px; } .s2 { margin: 0 8px; }
.nettitle { font-size: 11px; letter-spacing: .14px; width: 445px; flex: none; white-space: nowrap; }
.n-exp { margin-left: 11px; } .s3 { margin-left: 11px; } .n-fit { margin-left: 11px; }
.n-tog { width: 32px; height: 35px; background: #a9b0bf; display: flex; align-items: center; justify-content: center; }
.n-first { margin-left: 11px; }
.n-t { margin-left: 6px; } .n-a { margin-left: 11px; }
.big-a { font: bold 21px "Liberation Serif", serif; text-anchor: middle; fill: #111; }
.s4 { margin-left: 10px; }
.counts { width: 153px; flex: none; height: 36px; position: relative; display: flex; padding: 5px 0 0 7px; }
.c-chk { flex: none; }
.c-n { font-size: 10px; line-height: 13px; color: #777; margin-left: 49px; text-align: right; }
.c-bar { width: 1px; height: 24px; background: #999; margin: 0 4px 0 4px; }
.c-eye { flex: none; }
.c-n2 { margin-left: 47px; }
.s5 { margin-left: 0; } .n-net { margin-left: 14px; }

.vsplit { width: 4px; flex: none; background: #9a9fab; }
.rpanel { width: 242px; flex: none; overflow: hidden; display: flex; flex-direction: column; position: relative; }
.phead { height: 24px; flex: none; display: flex; align-items: center; padding-left: 10px; font-size: 11px; border-bottom: 1px solid #b0b4bf; position: relative; }
.caret { font-size: 7px; margin-left: 8px; font-weight: normal; }
.pctl { position: absolute; right: 9px; top: 5px; display: flex; gap: 11px; align-items: center; }
.checks { display: grid; grid-template-columns: 107px 140px; grid-auto-rows: 18px; padding: 4px 0 0 12px; height: 70px; flex: none; }
.chk { display: flex; align-items: center; gap: 6px; font-size: 10px; font-weight: bold; white-space: nowrap; color: #111; }
.off { color: #a5a8ae; }
.box { width: 14px; height: 14px; border: 1px solid #8d919b; border-radius: 3px; background: linear-gradient(#fff, #d5d9e2); flex: none; display: block; }
.box svg { display: block; }
.off .box { border-color: #b3b6bd; background: #d5d9e2; }
.box-on { border-color: #445; }
.pbtns { display: grid; grid-template-columns: 110px 111px; gap: 5px; padding: 0 0 0 12px; flex: none; grid-auto-rows: 20px; }
.pbtns button, .sb { font: bold 10px "DejaVu Sans", sans-serif; color: #111; background: linear-gradient(#fff, #ced2db); border: 1px solid #777c88; border-radius: 5px; padding: 0; }
.filters { margin: 5px 4px 0 3px; height: 353px; flex: none; display: flex; border: 1px solid #a4a8b3; }
.flist { width: 219px; flex: none; background: #fff; }
.fitem { height: 24px; background: #c0c0c0; border: 1px solid #fff; outline: 1px solid #a0a0a0; outline-offset: -2px; display: flex; align-items: center; font-size: 10px; font-weight: bold; color: #111; }
.tri-r { width: 0; height: 0; border-left: 6px solid #111; border-top: 5px solid transparent; border-bottom: 5px solid transparent; margin: 2px 15px 0 15px; }
.tri-d { width: 0; height: 0; border-top: 5px solid #111; border-left: 5px solid transparent; border-right: 5px solid transparent; margin: 3px 15px 0 14px; }
.pscroll { flex: 1; background: #c9cdd6; display: flex; flex-direction: column; }
.pscroll .arr, .tscroll .arr { height: 14px; font-size: 8px; font-weight: normal; text-align: center; line-height: 14px; background: #d5d9e2; color: #333; flex: none; }
.thumb { flex: 1; background: #d5d9e2; border: 1px solid #aeb2bc; border-radius: 0 0 8px 8px; }
.ntabs { margin-top: 7px; border-top: 1px solid #333; display: flex; padding-left: 11px; height: 23px; flex: none; }
.ntab { width: 56px; text-align: center; font-size: 12px; line-height: 22px; border: 1px solid #555; border-top: 0; border-radius: 0 0 5px 5px; height: 22px; background: linear-gradient(#e4e7ed, #f4f5f8); }
.ntab-on { background: linear-gradient(#afc4d8, #dbe2ea); width: 54px; }

.hsplit { height: 5px; flex: none; background: #9a9fab; }
.bpanel { flex: 1; min-height: 0; display: flex; flex-direction: column; }
.bhead { height: 24px; padding-left: 10px; }
.bhead .pctl { right: 9px; }
.bhead span { font-size: 11px; }
.frow { height: 26px; flex: none; display: flex; align-items: center; padding-left: 10px; }
.f-donut { margin-left: 14px; } .f-ring { margin-left: 13px; }
.combo { margin-left: 13px; width: 979px; height: 22px; border: 1px solid #777c88; border-radius: 4px; background: linear-gradient(#fff, #d0d4dd); display: flex; align-items: center; padding-left: 3px; font-size: 12px; position: relative; }
.cbtn { position: absolute; right: 0; top: 0; width: 14px; height: 20px; background: linear-gradient(#a8bed4, #c9d6e2); font-size: 7px; font-style: normal; text-align: center; line-height: 20px; border-radius: 0 3px 3px 0; }
.rows { font-size: 10px; margin-left: 2px; width: 40px; flex: none; white-space: nowrap; }
.f-chk { margin-left: 19px; } .f-sav { margin-left: 14px; } .f-gear { margin-left: 14px; }
.tblbox { margin: 2px 3px 0 2px; flex: 1; min-height: 0; display: flex; border: 1px solid #a4a8b3; border-bottom: 0; overflow: hidden; }
.tblmain { flex: 1; min-width: 0; background: #fff; overflow: hidden; }
table { border-collapse: collapse; table-layout: fixed; width: 1221px; font-size: 12px; letter-spacing: .15px; }
th { height: 21px; font-weight: normal; text-align: left; padding: 0 5px 0 6px; background: linear-gradient(#e9ebf0, #d0d4dd); border-right: 1px solid #b8bcc6; border-bottom: 1px solid #7f8490; white-space: nowrap; overflow: hidden; color: #333; }
th:nth-child(-n+2), td:nth-child(-n+2) { padding-left: 5px; }
th:last-child, td:last-child { padding-left: 7px; }
tbody tr:first-child td { padding-top: 1px; height: 17px; }
td { height: 16px; padding: 0 6px; white-space: nowrap; overflow: hidden; line-height: 14px; color: #222; }
td.n { text-align: right; }
td.n + td.n { padding-right: 4px; }
td.cc { padding: 1px 4px 1px 5px; }
.cc i { display: block; height: 12px; width: 143px; }
.c1 { background: #a6cee3; } .c2 { background: #1f78b4; } .c3 { background: #b2df8a; } .c4 { background: #33a02c; }
.c5 { background: #fb9a99; } .c6 { background: #e31a1c; } .c7 { background: #fdbf6f; } .c8 { background: #ff7f00; }
.tscroll { width: 15px; flex: none; display: flex; flex-direction: column; background: #c9cdd6; }
.tscroll-head { height: 21px; flex: none; background: linear-gradient(#e9ebf0, #d0d4dd); border-bottom: 1px solid #7f8490; }
.tthumb { flex: 1; margin: 2px 0 20px; background: linear-gradient(90deg, #dfe6ee, #b9d0e6); border: 1px solid #46698c; border-radius: 8px; }

.rstrip { width: 28px; flex: none; }
.rtab { height: 78px; background: #a9b0bf; display: flex; flex-direction: column; align-items: center; padding: 4px 1px 0 0; gap: 2px; }
.rtab span { writing-mode: vertical-rl; font-size: 11px; color: #222; }

.tabsbar { height: 30px; flex: none; display: flex; align-items: center; border-top: 1px solid #b0b4bf; border-bottom: 1px solid #a9adb8; padding-left: 39px; padding-right: 29px; font-size: 11px; letter-spacing: .12px; }
.bt { display: flex; align-items: center; gap: 5px; height: 28px; }
.bt-cmd { flex: 1; }
.bt-gap { margin-left: 20px; }
.bt-enr { gap: 4px; }
.bt-on { margin-left: 10px; background: #a9b0bf; width: 142px; padding-left: 5px; gap: 1px; white-space: nowrap; }
.cg { width: 16px; height: 16px; background: #3a79b6; color: #fff; font: bold 9px "DejaVu Sans", sans-serif; text-align: center; line-height: 16px; border-radius: 2px; }
.enr { font: 6px "DejaVu Sans", sans-serif; text-anchor: middle; fill: #111; stroke: none; }

.statusbar { height: 26px; flex: none; display: flex; align-items: center; padding: 0 9px; }
.sb { width: 43px; height: 20px; display: flex; align-items: center; justify-content: center; }
.sb2 { margin-left: 10px; width: 44px; }
.sb3 { margin-left: auto; width: 37px; }
```
